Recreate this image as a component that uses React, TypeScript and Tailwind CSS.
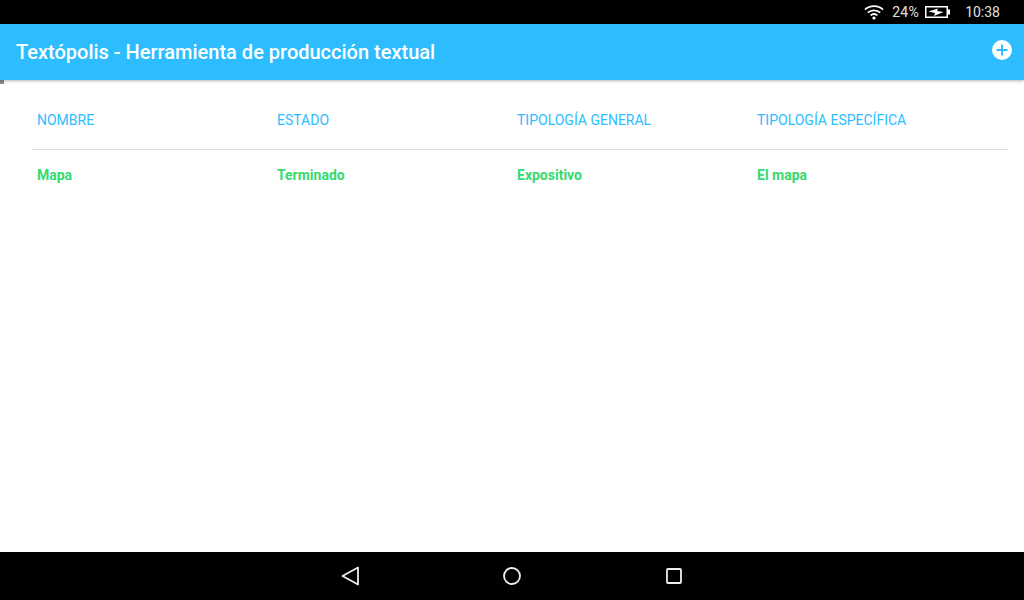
const columns = [
  { label: "NOMBRE", value: "Mapa" },
  { label: "ESTADO", value: "Terminado" },
  { label: "TIPOLOGÍA GENERAL", value: "Expositivo" },
  { label: "TIPOLOGÍA ESPECÍFICA", value: "El mapa" },
];

function Wifi() {
  return (
    <svg width="20" height="16" viewBox="0 0 20 16" fill="none" stroke="white" strokeWidth="1.8" className="block">
      <path d="M1 5.6C6 1 14 1 19 5.6" />
      <path d="M3.8 8.6C7.3 5.5 12.7 5.5 16.2 8.6" />
      <path d="M6.6 11.4C8.6 9.8 11.4 9.8 13.4 11.4" />
      <circle cx="10" cy="14" r="1.6" fill="white" stroke="none" />
    </svg>
  );
}

function Battery() {
  return (
    <svg width="25" height="12" viewBox="0 0 25 12" className="block">
      <rect x="0.75" y="0.75" width="21.5" height="10.5" fill="black" stroke="white" strokeWidth="1.5" />
      <rect x="23" y="3.5" width="2" height="5" fill="white" />
      <path d="M3.5 5.5L13 2.5L12 5L18.5 6L9 10L10 7Z" fill="white" />
    </svg>
  );
}

export default function App() {
  return (
    <div className="flex h-[600px] w-[1024px] flex-col overflow-hidden bg-white font-['Roboto',sans-serif]">
      <div className="flex h-6 items-center justify-end bg-black pr-6 text-[14px] text-[#e0e0e0]">
        <Wifi />
        <span className="ml-[8px] mt-[1px] w-[29px] text-[14px] tracking-[0.3px]">24%</span>
        <span className="ml-[4px]"><Battery /></span>
        <span className="ml-[15px]">10:38</span>
      </div>

      <header className="z-10 flex h-14 items-center justify-between bg-[#2dbdff] pl-4 pr-3 shadow-[0_1px_3px_rgba(0,0,0,0.3)]">
        <h1 className="text-[20px] font-medium text-white">Textópolis - Herramienta de producción textual</h1>
        <svg width="20" height="20" viewBox="0 0 20 20" className="mb-[4px]">
          <circle cx="10" cy="10" r="10" fill="white" />
          <path d="M10 4.5V15.5M4.5 10H15.5" stroke="#2dbdff" strokeWidth="2" />
        </svg>
      </header>

      <main className="relative flex-1 px-4">
        <div className="absolute left-0 top-0 h-[4px] w-[4px] bg-[#8a8a8a]" />
        <div className="ml-4">
          <div className="grid h-[70px] grid-cols-[240px_240px_240px_1fr] items-center border-b border-[#dcdcdc] pl-[5px] pt-[12px] text-[14px] text-[#2dbdff]">
            {columns.map((c) => (
              <div key={c.label}>{c.label}</div>
            ))}
          </div>
          <div className="grid h-[50px] grid-cols-[240px_240px_240px_1fr] items-center pl-[5px] text-[14px] font-bold text-[#35da6e]">
            {columns.map((c) => (
              <div key={c.label}>{c.value}</div>
            ))}
          </div>
        </div>
      </main>

      <nav className="flex h-12 items-center justify-center gap-[136px] bg-black">
        <svg width="32" height="20" viewBox="0 0 32 20" fill="none" stroke="#eeeeee" strokeWidth="1.8">
          <path d="M24 1.5V18.5L8.5 10Z" strokeLinejoin="round" />
        </svg>
        <svg width="20" height="20" viewBox="0 0 20 20" fill="none" stroke="#eeeeee" strokeWidth="1.8">
          <circle cx="10" cy="10" r="8" />
        </svg>
        <svg width="32" height="20" viewBox="0 0 32 20" fill="none" stroke="#eeeeee" strokeWidth="1.8">
          <rect x="9" y="3" width="14" height="14" rx="1" />
        </svg>
      </nav>
    </div>
  );
}
